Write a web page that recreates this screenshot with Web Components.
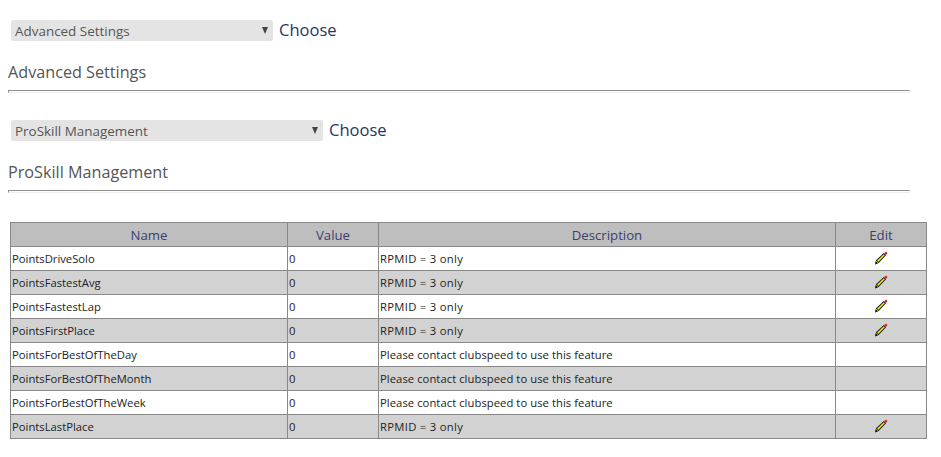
<!DOCTYPE html>
<html>
<head>
<meta charset="utf-8">
<title>ProSkill Management</title>
<style>
    body {
        margin: 0;
        background: #fff;
        font-family: "Open Sans", sans-serif;
        color: #444;
    }
</style>
</head>
<body>
<settings-section label="Advanced Settings" width="262"></settings-section>
<settings-section label="ProSkill Management" width="312"></settings-section>
<settings-table></settings-table>

<script>
class SettingsSection extends HTMLElement {
    constructor() {
        super();
        let label = this.getAttribute('label');
        let width = this.getAttribute('width');
        this.attachShadow({mode: 'open'}).innerHTML = `
            <style>
                :host { display: block; height: 100px; box-sizing: border-box; padding: 20px 31px 0 8px; }
                .picker { display: flex; align-items: center; height: 21px; padding-left: 3px; }
                .select {
                    width: ${width}px; height: 21px; box-sizing: border-box;
                    display: flex; align-items: center; justify-content: space-between;
                    padding: 0 4px; background: #e4e4e4; border-radius: 2px;
                    font-size: 13.45px; color: #555;
                }
                .arrow { width: 0; height: 0; border: 3.5px solid transparent; border-top: 7px solid #444; border-bottom: 0; margin-right: 1px; }
                .choose { margin-left: 6px; font-size: 16.55px; color: #27365f; position: relative; top: -1px; }
                h2 { margin: 19px 0 0; height: 24px; font-size: 16.2px; line-height: 24px; font-weight: 400; color: #555; }
                hr { margin: 6px 0 0; height: 1px; border: 1px solid; border-color: #8f8f8f #eee #eee #8f8f8f; background: #fff; }
            </style>
            <div class="picker">
                <div class="select"><span>${label}</span><span class="arrow"></span></div>
                <span class="choose">Choose</span>
            </div>
            <h2>${label}</h2>
            <hr>
        `;
    }
}
customElements.define('settings-section', SettingsSection);

class EditPencil extends HTMLElement {
    constructor() {
        super();
        this.attachShadow({mode: 'open'}).innerHTML = `
            <style>
                :host { display: inline-flex; vertical-align: middle; position: relative; top: -1px; }
            </style>
            <svg width="14" height="14" viewBox="0 0 14 14">
                <path d="M1 13.4 L1.6 10 L4 12.4 Z" fill="#111"/>
                <path d="M1.8 9.6 L9.8 2 L12 4.2 L4.4 12.2 Z" fill="#111"/>
                <path d="M3 9.8 L9.8 3.2 L10.8 4.2 L4.2 11 Z" fill="#f6ec1c"/>
                <path d="M10.2 2.2 L11.4 1 Q12.4 0.6 13 1.2 Q13.5 2 13 2.8 L11.8 3.9 Z" fill="#e0142a"/>
            </svg>
        `;
    }
}
customElements.define('edit-pencil', EditPencil);

const RPMID = '<span class="wide">RPMID = 3 only</span>';
const CONTACT = '<span class="contact">Please contact clubspeed to use this feature</span>';
const SETTINGS = [
    ['PointsDriveSolo', '0', RPMID, true],
    ['PointsFastestAvg', '0', RPMID, true],
    ['PointsFastestLap', '0', RPMID, true],
    ['PointsFirstPlace', '0', RPMID, true],
    ['PointsForBestOfTheDay', '0', CONTACT, false],
    ['PointsForBestOfTheMonth', '0', CONTACT, false],
    ['PointsForBestOfTheWeek', '0', CONTACT, false],
    ['PointsLastPlace', '0', RPMID, true],
];

class SettingsTable extends HTMLElement {
    constructor() {
        super();
        let rows = SETTINGS.map(s => `
            <tr>
                <td>${s[0]}</td><td>${s[1]}</td><td>${s[2]}</td>
                <td class="edit">${s[3] ? '<edit-pencil></edit-pencil>' : ''}</td>
            </tr>`).join('');
        this.attachShadow({mode: 'open'}).innerHTML = `
            <style>
                :host { display: block; padding: 22px 14px 0 10px; }
                table { border-collapse: collapse; table-layout: fixed; width: 917px; }
                th, td { border: 1px solid #888; padding: 0 0 0 1px; font-size: 11.25px; font-weight: 400; color: #222; height: 23px; overflow: hidden; white-space: nowrap; }
                th { background: #bebebe; font-size: 13.2px; color: #3a3f6e; text-align: center; height: 23px; padding: 0; }
                tr:nth-child(even) td { background: #d2d2d2; }
                .edit { text-align: center; padding: 0; }
                .wide { letter-spacing: .3px; }
                .contact { letter-spacing: .05px; }
            </style>
            <table>
                <colgroup><col style="width:277px"><col style="width:91px"><col style="width:457px"><col style="width:91px"></colgroup>
                <thead><tr><th>Name</th><th>Value</th><th>Description</th><th>Edit</th></tr></thead>
                <tbody>${rows}</tbody>
            </table>
        `;
    }
}
customElements.define('settings-table', SettingsTable);
</script>
</body>
</html>
